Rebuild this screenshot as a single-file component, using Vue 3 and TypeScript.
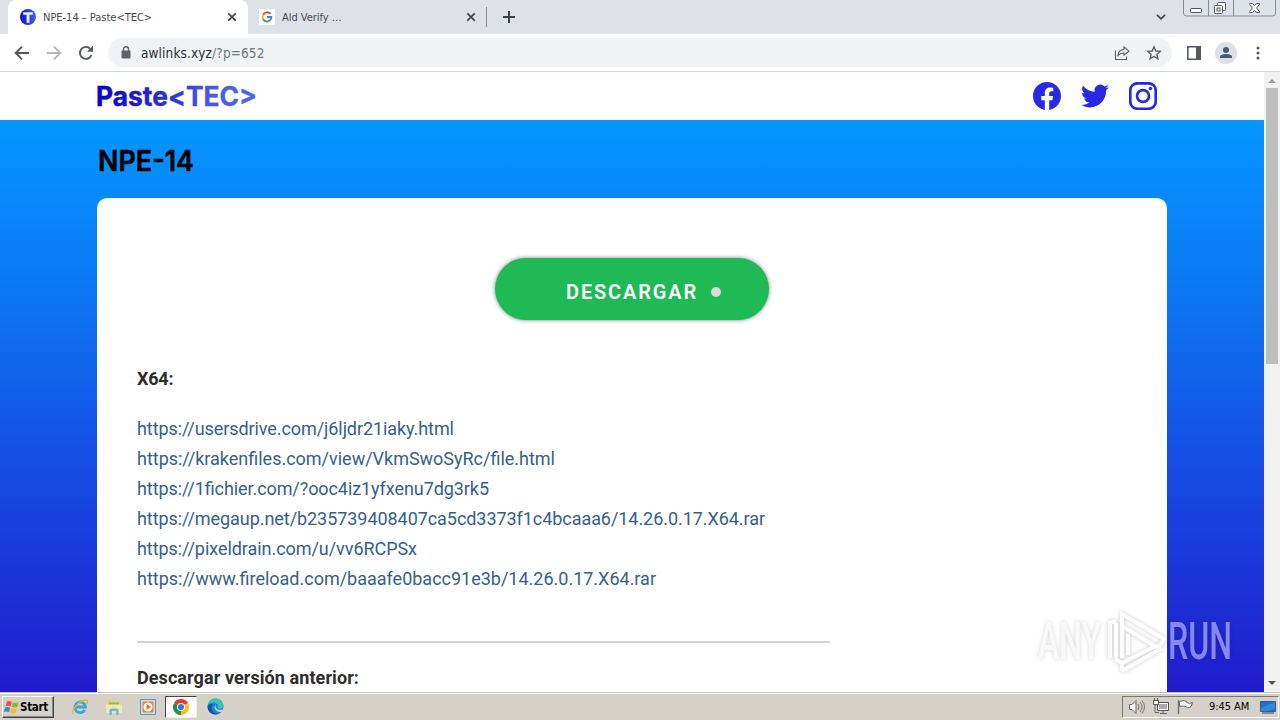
<script setup lang="ts">
interface Tab { title: string; kind: 'paste' | 'google'; active: boolean }
const tabs: Tab[] = [
  { title: 'NPE-14 – Paste<TEC>', kind: 'paste', active: true },
  { title: 'Ald Verify …', kind: 'google', active: false },
]
interface Link { url: string; width: number }
const links: Link[] = [
  { url: 'https://usersdrive.com/j6ljdr21iaky.html', width: 317 },
  { url: 'https://krakenfiles.com/view/VkmSwoSyRc/file.html', width: 418 },
  { url: 'https://1fichier.com/?ooc4iz1yfxenu7dg3rk5', width: 352 },
  { url: 'https://megaup.net/b235739408407ca5cd3373f1c4bcaaa6/14.26.0.17.X64.rar', width: 628 },
  { url: 'https://pixeldrain.com/u/vv6RCPSx', width: 280 },
  { url: 'https://www.fireload.com/baaafe0bacc91e3b/14.26.0.17.X64.rar', width: 519 },
]
</script>

<template>
  <div class="screen">
    <header class="tabstrip">
      <div v-for="t in tabs" :key="t.title" class="tab" :class="{ active: t.active }">
        <svg v-if="t.kind === 'paste'" class="fav" viewBox="0 0 16 16">
          <defs><linearGradient id="fg" x2="1" y2="0"><stop stop-color="#0713b8" /><stop offset="1" stop-color="#4a63e6" /></linearGradient></defs>
          <circle cx="8" cy="8" r="8" fill="url(#fg)" /><path d="M3.2 3.2h9.6v2.6H9.5v8H6.6v-8H3.2z" fill="#e8ecff" />
        </svg>
        <svg v-else class="fav" viewBox="0 0 16 16">
          <path fill="#fff" d="M0 0h16v16H0z" />
          <g fill="none" stroke-width="2"><path d="M11.5 4.9A4.4 4.4 0 0 0 4.2 5.8" stroke="#ea4335" /><path d="M4.2 5.8a4.4 4.4 0 0 0 0 4.4" stroke="#fbbc05" /><path d="M4.2 10.2a4.4 4.4 0 0 0 6.8 1.1" stroke="#34a853" /><path d="M11 11.3A4.3 4.3 0 0 0 12.3 8H8" stroke="#4285f4" /></g>
        </svg>
        <span class="tab-title">{{ t.title }}</span>
        <svg class="close" viewBox="0 0 10 10"><path d="M1.3 1.3l7.4 7.4M8.7 1.3L1.3 8.7" /></svg>
      </div>
      <i class="divider"></i>
      <svg class="plus" viewBox="0 0 12 12"><path d="M6 0v12M0 6h12" /></svg>
      <svg class="chev" viewBox="0 0 10 6"><path d="M1 .8l4 4 4-4" /></svg>
      <svg class="winbtns" width="94" height="17" viewBox="0 0 94 17">
        <path d="M.5 0v13a3 3 0 0 0 3 3h86a3 3 0 0 0 3-3V0M25.500 0v16M50.500 0v16" fill="#dfe2e8" stroke="#858b95" />
        <g fill="#fff" stroke="#53575f"><rect x="7.500" y="8.500" width="11" height="4" rx="1" /><rect x="34.500" y="2.500" width="8" height="8" rx="1" /><rect x="31.500" y="5.500" width="8" height="8" rx="1" /><rect x="34" y="8" width="3" height="3" /><path d="M66.500 3.500h3l2 2 2-2h3v1l-3 3.500 3 3.500v1h-3l-2-2-2 2h-3v-1l3-3.500-3-3.500z" /></g>
      </svg>
    </header>

    <div class="toolbar">
      <svg class="nav" viewBox="0 0 16 16"><path d="M15 8H2M8 1.700L1.700 8 8 14.300" /></svg>
      <svg class="nav dim" viewBox="0 0 16 16"><path d="M1 8h13M8 1.700L14.300 8 8 14.300" /></svg>
      <svg class="nav" viewBox="0 0 16 16"><path d="M13.500 10A6 6 0 1 1 12.400 3.900L14 5.500" /><path d="M15 .8v6H9z" class="solid" /></svg>
      <div class="omnibox">
        <svg class="lock" viewBox="0 0 10 13"><rect x="0.500" y="4.500" width="9" height="8" rx="1" fill="#5f6368" /><path d="M2.500 5V3.200a2.500 2.500 0 0 1 5 0V5" fill="none" stroke="#5f6368" stroke-width="1.400" /></svg>
        <span class="url">awlinks.xyz<span class="path">/?p=652</span></span>
        <svg class="share" viewBox="0 0 16 16"><path d="M1.500 5.500V14.500h11v-3M10 2l5 4.200-5 4V8C7 8 5 9 3.800 11.200 4 7.500 6.200 4.800 10 4.300z" /></svg>
        <svg class="star" viewBox="0 0 16 16"><path d="M8 1.800l1.800 4.200 4.400.4-3.300 3 1 4.400L8 11.500l-3.900 2.300 1-4.400-3.300-3 4.400-.4z" /></svg>
      </div>
      <svg class="panel" viewBox="0 0 14 14"><path d="M.8.800h12.400v12.400H.800z" fill="none" stroke="#55595f" stroke-width="1.600" /><path d="M9 0h5v14H9z" fill="#55595f" /></svg>
      <svg class="avatar" viewBox="0 0 22 22"><circle cx="11" cy="11" r="11" fill="#dcdfe5" /><circle cx="11" cy="8" r="3" fill="#4a5872" /><path d="M5 16v-1.200C5 12.800 8.500 12 11 12s6 .8 6 2.800V16z" fill="#4a5872" /></svg>
      <svg class="dots" viewBox="0 0 4 14"><circle cx="2" cy="2" r="1.500" /><circle cx="2" cy="7" r="1.500" /><circle cx="2" cy="12" r="1.500" /></svg>
    </div>

    <div class="viewport">
      <div class="page">
        <div class="site-head">
          <svg class="logo" width="164" height="36" viewBox="0 0 164 36">
            <defs><linearGradient id="lg" gradientUnits="userSpaceOnUse" x1="0" y1="0" x2="160" y2="0"><stop stop-color="#0700c2" /><stop offset=".48" stop-color="#2d35d6" /><stop offset=".7" stop-color="#4a58dc" /><stop offset="1" stop-color="#4869ea" /></linearGradient></defs>
            <text x="0" y="27" textLength="161" lengthAdjust="spacingAndGlyphs" fill="url(#lg)">Paste&lt;TEC&gt;</text>
          </svg>
          <div class="social">
            <svg viewBox="0 0 24 24"><path d="M24 12.073c0-6.627-5.373-12-12-12s-12 5.373-12 12c0 5.990 4.388 10.954 10.125 11.854v-8.385H7.078v-3.470h3.047V9.430c0-3.007 1.792-4.669 4.533-4.669 1.312 0 2.686.235 2.686.235v2.953H15.830c-1.491 0-1.956.925-1.956 1.874v2.250h3.328l-.532 3.470h-2.796v8.385C19.612 23.027 24 18.062 24 12.073z" /></svg>
            <svg viewBox="0 0 24 24"><path d="M23.953 4.570a10 10 0 01-2.825.775 4.958 4.958 0 002.163-2.723c-.951.555-2.005.959-3.127 1.184a4.920 4.920 0 00-8.384 4.482C7.690 8.095 4.067 6.130 1.640 3.162a4.822 4.822 0 00-.666 2.475c0 1.710.870 3.213 2.188 4.096a4.904 4.904 0 01-2.228-.616v.060a4.923 4.923 0 003.946 4.827 4.996 4.996 0 01-2.212.085 4.936 4.936 0 004.604 3.417 9.867 9.867 0 01-6.102 2.105c-.390 0-.779-.023-1.170-.067a13.995 13.995 0 007.557 2.209c9.053 0 13.998-7.496 13.998-13.985 0-.210 0-.420-.015-.630A9.935 9.935 0 0024 4.590z" /></svg>
            <svg viewBox="0 0 24 24"><rect x="1.100" y="1.100" width="21.800" height="21.800" rx="6" class="line" /><circle cx="12" cy="12" r="5.100" class="line" /><circle cx="18.400" cy="5.600" r="1.450" /></svg>
          </div>
        </div>
        <main class="body">
          <svg class="title" width="110" height="36" viewBox="0 0 110 36"><text x="1" y="29" textLength="96" lengthAdjust="spacingAndGlyphs">NPE-14</text></svg>
          <article class="card">
            <div class="download"><span>DESCARGAR</span><i></i></div>
            <h3 class="sub">X64:</h3>
            <div class="links">
              <svg v-for="l in links" :key="l.url" width="700" height="30"><text x="0" y="21" :textLength="l.width">{{ l.url }}</text></svg>
            </div>
            <div class="rule"></div>
            <h3 class="sub prev">Descargar versión anterior:</h3>
          </article>
        </main>
      </div>
      <div class="scroll">
        <svg width="8" height="4" viewBox="0 0 8 4"><path d="M0 4l4-4 4 4z" fill="#9b9b9b" /></svg>
        <div class="thumb"></div>
        <svg width="8" height="4" viewBox="0 0 8 4"><path d="M0 0h8L4 4z" fill="#555" /></svg>
      </div>
    </div>

    <footer class="taskbar">
      <div class="start">
        <svg width="16" height="15" viewBox="0 0 16 15"><path d="M3 1.500q2.500-1 4.700.3L6.600 6.500Q4 5.300 1.500 6.300z" fill="#e8572a" /><path d="M8.700 2.300q2.700 1.300 6 0L13.300 7q-3 1-5.700-.2z" fill="#85b83b" /><path d="M1.200 7.500q2.600-1 5.100.2L5 12.200Q2.500 11 0 12z" fill="#3d85d5" /><path d="M7.400 8q2.700 1.300 5.700.2L11.800 13q-3 1-5.600-.4z" fill="#f5bb27" /></svg>
        <b>Start</b>
      </div>
      <div class="apps">
        <div class="app"><svg width="18" height="18" viewBox="0 0 18 18"><path d="M13.800 12A5.300 5.300 0 1 1 14.500 9H5" fill="none" stroke="#38a5df" stroke-width="2.800" /><path d="M2 15.500C-.5 12 9 2 15 2c2.500 0 1.500 2.500.5 4" fill="none" stroke="#e8b62d" stroke-width="1.300" /></svg></div>
        <div class="app"><svg width="18" height="18" viewBox="0 0 18 18"><path d="M2 3.500Q2 2 4 2h4l1 1.500h6.500V8H2z" fill="#edcf6f" /><path d="M4 4.500h10V7H4z" fill="#79bd7c" /><path d="M1 6.500h16V15H1z" fill="#f7e7a5" /><path d="M4.500 17v-4.500q0-2 2-2h5q2 0 2 2V17h-2.300v-4H6.800v4z" fill="#6db4d9" /></svg></div>
        <div class="app"><svg width="18" height="18" viewBox="0 0 18 18"><path d="M1.500 1.500h15v15h-15z" fill="#c4dff2" stroke="#5796c7" /><rect x="3.500" y="3.500" width="11" height="11" rx="1" fill="#f0871b" /><circle cx="9" cy="9" r="4.500" fill="#fff" /><path d="M7.500 6l4.500 3-4.500 3z" fill="#e8730e" /></svg></div>
        <div class="app pressed"><svg width="16" height="16" viewBox="0 0 16 16"><path d="M8 8L1.070 4A8 8 0 0 1 14.930 4z" fill="#e33b2e" /><path d="M8 8L14.930 4A8 8 0 0 1 8 16z" fill="#fbc116" /><path d="M8 8v8A8 8 0 0 1 1.070 4z" fill="#229342" /><path d="M1.070 4L4.600 10 8 8zM8 4.200h6.990L14.930 4H8z" fill="#e33b2e" /><path d="M1.070 4L4.600 10 6 8z" fill="#229342" /><circle cx="8" cy="8" r="4" fill="#fff" /><circle cx="8" cy="8" r="3.100" fill="#3478e5" /></svg></div>
        <div class="app"><svg width="17" height="17" viewBox="0 0 17 17"><circle cx="8.500" cy="8.500" r="8" fill="#1686d3" /><path d="M.7 8C1-1.500 15-2 16.500 7.500c.3 3-4 4-6 2.500 1-1 .7-3-.5-4C7 3.500 2 4.500.7 8z" fill="#38c3b8" /><path d="M6 6.500c-3.500 4 0 9 6 9.200-5 2.500-12-1-11.300-7.500C2 5.800 4.500 5 6 6.500z" fill="#0c59a5" /><path d="M9 7c-1.500 3 1.500 6 7.500 4.500 -.4 1.200-1 2-2 2.500C11 14.500 8 12 7.500 9.500c0-1.200.5-2 1.500-2.500z" fill="#d5d0c8" /></svg></div>
      </div>
      <div class="tray">
        <svg width="18" height="18" viewBox="0 0 18 18"><path d="M1.500 6.500H4l4-4v13l-4-4H1.500z" fill="#fff" stroke="#686868" /><path d="M10 6q2 3 0 6M12 4q4 5 0 10M14 2.500q5 6.500 0 13" fill="none" stroke="#777" /></svg>
        <svg width="18" height="18" viewBox="0 0 18 18"><path d="M5.500 4.500h11v8h-11z" fill="#aaa" stroke="#555" /><path d="M6.500 5.500h9v6h-9z" fill="none" stroke="#fff" /><path d="M8 15.500h7M11 13v2M3 6v8.500h4" stroke="#666" fill="none" /><path d="M1.500 2.500h5v4h-5zM2.500 0v2M5.500 0v2" fill="#fff" stroke="#555" /></svg>
        <svg width="18" height="18" viewBox="0 0 18 18"><path d="M3.500 3.500q4-2 7 0v1q3 2 6 0-1 5-3 5-3 0-4-1-3-1-6 0z" fill="#fff" stroke="#666" /><path d="M2.500 2v14" stroke="#777" stroke-width="1.500" /></svg>
        <span class="clock">9:45 AM</span>
        <svg width="16" height="14" viewBox="0 0 16 14"><path d="M.5 1.500h15v10H.500z" fill="#1872cf" stroke="#345b8c" /><path d="M1 8l14-6v6q-6 4-14 3z" fill="#2f8bd8" /><path d="M2 13h12" stroke="#345" /></svg>
      </div>
    </footer>

    <svg class="watermark" width="206" height="72" viewBox="0 0 206 72">
      <g class="wm-text"><text x="6" y="52.500" textLength="63" lengthAdjust="spacingAndGlyphs">ANY</text><text x="136" y="52.500" textLength="64" lengthAdjust="spacingAndGlyphs" class="right">RUN</text></g>
      <g class="wm-icon"><path d="M78 52V17l6-2M84 17v35" /><path d="M90 52V8l42 25-6 9-36-22" /><path d="M96 49V28M83 53l7 4 36-18M90 65l40-23M90 57v8" /></g>
    </svg>
  </div>
</template>

<style>
body { margin: 0; overflow: hidden; }
</style>

<style scoped>
.screen { position: relative; width: 1280px; height: 720px; overflow: hidden; display: flex; flex-direction: column; font-family: "DejaVu Sans Condensed", "DejaVu Sans", sans-serif; background: #fff; }
.screen svg { display: block; flex-shrink: 0; }
.tabstrip { height: 34px; flex-shrink: 0; background: #dee1e7; display: flex; align-items: center; padding-left: 8px; box-sizing: border-box; }
.tab { height: 34px; width: 240px; display: flex; align-items: center; padding: 0 11px 0 12px; box-sizing: border-box; font-size: 11px; color: #45484d; border-radius: 8px 8px 0 0; }
.tab + .tab { width: 239px; padding-left: 11px; }
.tab.active { background: #fff; }
.fav { width: 16px; height: 16px; margin-right: 7px; }
.tab-title { flex: 1; letter-spacing: -.02px; white-space: nowrap; }
.close { width: 10px; height: 10px; stroke: #414449; stroke-width: 1.700; }
.divider { width: 1px; height: 20px; background: #8b8f96; margin-left: -1px; }
.plus { width: 12px; height: 12px; margin-left: 16px; stroke: #3b3f46; stroke-width: 2; }
.chev { width: 10px; height: 6px; margin-left: auto; fill: none; stroke: #45494f; stroke-width: 1.800; }
.winbtns { align-self: flex-start; margin-left: 17px; margin-right: 3px; }
.toolbar { height: 38px; flex-shrink: 0; box-sizing: border-box; border-bottom: 1px solid #d6d8db; display: flex; align-items: center; padding-left: 14px; background: #fff; }
.nav { width: 16px; height: 16px; margin-right: 16px; fill: none; stroke: #55595e; stroke-width: 1.900; }
.nav .solid { fill: #55595e; stroke: none; }
.nav.dim { stroke: #b5b7b9; }
.nav:nth-child(3) { margin-right: 14px; }
.omnibox { width: 1064px; height: 29px; border-radius: 15px; background: #f0f3f5; display: flex; align-items: center; box-sizing: border-box; padding: 0 10px 0 13px; }
.lock { width: 10px; height: 13px; }
.url { flex: 1; margin-left: 10px; font-size: 13.500px; letter-spacing: .12px; color: #2c2e31; }
.path { color: #72767b; }
.share, .star { width: 16px; height: 16px; fill: none; stroke: #5b5f64; stroke-width: 1.100; }
.star { margin-left: 16px; stroke-width: 1.400; }
.panel { width: 14px; height: 14px; margin-left: 15px; }
.avatar { width: 22px; height: 22px; margin-left: 14px; }
.dots { width: 4px; height: 14px; margin-left: 19px; fill: #55595e; }
.viewport { height: 620px; flex-shrink: 0; display: flex; overflow: hidden; }
.page { width: 1264px; height: 620px; overflow: hidden; }
.site-head { height: 48px; display: flex; align-items: center; justify-content: space-between; padding: 0 107px 0 96px; background: #fff; box-sizing: border-box; }
.logo { margin-top: 1px; }
.logo text { font: 700 27px Inter, sans-serif; stroke: url(#lg); stroke-width: .4; }
.social { display: flex; gap: 20px; }
.social svg { width: 28px; height: 28px; fill: #2828e5; }
.social .line { fill: none; stroke: #2828e5; stroke-width: 2.300; }
.body { height: 572px; padding: 22px 97px 0; box-sizing: border-box; background: linear-gradient(#0596ff, #0b7df5 25%, #1551e6 57%, #211bcb); overflow: hidden; }
.title text { font: 600 28.500px Inter, sans-serif; stroke: #000; stroke-width: .5; }
.card { margin-top: 20px; height: 500px; border-radius: 10px 10px 0 0; background: #fff; padding: 60px 40px 0; box-sizing: border-box; }
.download { width: 274px; height: 62px; margin: 0 auto; border-radius: 31px; background: #1fb955; box-shadow: 0 0 4px rgba(0,0,0,.5); display: flex; align-items: center; box-sizing: border-box; padding: 6px 0 0 71px; color: #fff; font: 600 20px Roboto, sans-serif; }
.download span { letter-spacing: 1.850px; width: 134px; white-space: nowrap; }
.download i { width: 10px; height: 10px; border-radius: 50%; background: #dadada; margin-left: 11px; }
.sub { margin: 44px 0 0; height: 30px; font: 700 18px/30px Roboto, sans-serif; letter-spacing: -.2px; color: #2d2d2d; }
.links { margin-top: 20px; }
.links text { font: 400 18px Roboto, sans-serif; fill: #345f8c; }
.rule { width: 693px; height: 2px; background: #d3d3d3; margin-top: 47px; }
.prev { margin-top: 20px; white-space: nowrap; letter-spacing: .08px; }
.scroll { width: 16px; background: #f1f1f1; display: flex; flex-direction: column; align-items: center; padding: 7px 0; box-sizing: border-box; }
.thumb { width: 12px; height: 276px; background: #bdbdbd; margin: 5px 0 auto; }
.taskbar { height: 28px; flex-shrink: 0; background: #d5d0c8; border-top: 1px solid #c8c5bd; box-shadow: inset 0 1px #fff; display: flex; align-items: center; padding-left: 2px; box-sizing: border-box; }
.start { width: 52px; height: 22px; margin-top: 1px; box-sizing: border-box; border: 1px solid; border-color: #fff #444 #444 #fff; box-shadow: inset -1px -1px #888; display: flex; align-items: center; padding-left: 1px; font-size: 11.500px; letter-spacing: -.3px; }
.apps { display: flex; margin-left: 9px; }
.app { width: 34px; height: 22px; display: flex; justify-content: center; align-items: center; box-sizing: border-box; }
.app.pressed { width: 32px; margin: 0 1px 0 0; background: #fff; border: 1px solid; border-color: #444 #eee #eee #444; }
.tray { width: 157px; height: 22px; margin-left: auto; margin-right: 1px; box-sizing: border-box; border: 1px solid; border-color: #777 #fff #fff #777; display: flex; align-items: center; padding-left: 5px; gap: 6px; font-size: 11px; }
.clock { margin-left: 9px; width: 44px; margin-right: 1px; letter-spacing: -.05px; white-space: nowrap; }
.watermark { position: absolute; left: 1032px; top: 606px; overflow: visible; filter: drop-shadow(0 0 2px rgba(0,0,0,.22)); }
.wm-text text { font: 500 52px Roboto, sans-serif; fill: rgba(255,255,255,.75); }
.wm-text .right { fill: rgba(180,180,255,.7); }
.wm-icon { fill: none; stroke: rgba(255,255,255,.9); stroke-width: 4; }
</style>
